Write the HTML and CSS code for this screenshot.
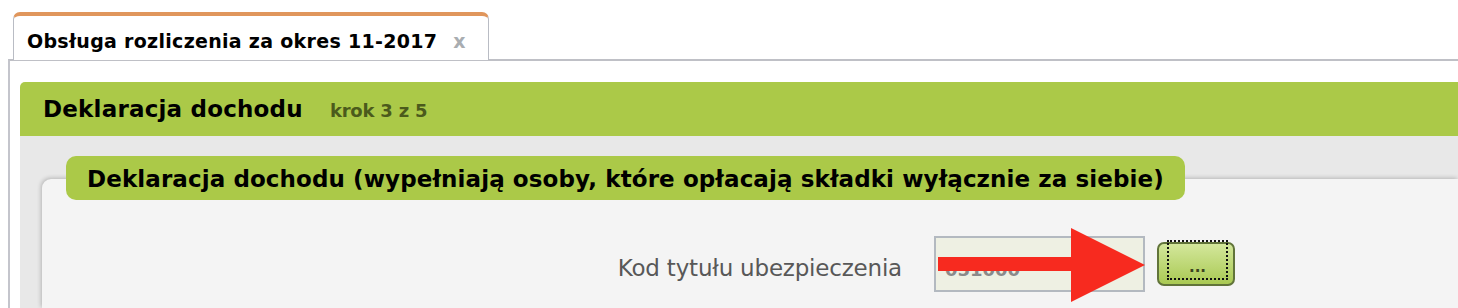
FILE: index.html
```html
<!DOCTYPE html>
<html lang="pl">
<head>
<meta charset="utf-8">
<title>Obsługa rozliczenia</title>
<link rel="stylesheet" href="styles.css">
</head>
<body>
<div class="tabbar">
  <div class="tab">
    <span class="tab-title">Obsługa rozliczenia za okres 11-2017</span>
    <span class="tab-close">x</span>
  </div>
</div>
<div class="panel">
  <div class="wizard-head">
    <span class="wizard-title">Deklaracja dochodu</span>
    <span class="wizard-step">krok 3 z 5</span>
  </div>
  <div class="wizard-body">
    <div class="group-title">Deklaracja dochodu (wypełniają osoby, które opłacają składki wyłącznie za siebie)</div>
    <div class="group-box">
      <div class="field-row">
        <label class="field-label" for="kod">Kod tytułu ubezpieczenia</label>
        <div class="field-input-wrap">
          <input id="kod" class="field-input" type="text" value="051000">
          <svg class="arrow" width="207" height="74" viewBox="0 0 207 74">
            <rect x="0" y="29" width="136" height="14" fill="#f72a1f"/>
            <polygon points="133,0 207,37 133,74" fill="#f72a1f"/>
          </svg>
        </div>
        <button class="pick-btn" type="button"><span class="pick-focus">...</span></button>
      </div>
    </div>
  </div>
</div>
</body>
</html>
```

FILE: styles.css
```css
html, body {
  margin: 0;
  padding: 0;
  background: #ffffff;
  overflow: hidden;
}
body {
  width: 1458px;
  height: 308px;
  font-family: "DejaVu Sans", Verdana, sans-serif;
}
.tabbar {
  display: flex;
  padding: 12px 0 0 13px;
  position: relative;
  z-index: 2;
}
.tab {
  display: flex;
  align-items: center;
  box-sizing: border-box;
  width: 476px;
  height: 48px;
  background: #fff;
  border-top: 4px solid #e0965c;
  border-left: 1px solid #b9bcc4;
  border-right: 1px solid #b9bcc4;
  border-radius: 7px 7px 0 0;
  padding: 6px 0 0 13px;
  margin-bottom: -1px;
}
.tab-title {
  font-weight: bold;
  font-size: 19px;
  color: #000;
  letter-spacing: 0.3px;
}
.tab-close {
  margin-left: 16px;
  color: #a9adb1;
  font-weight: bold;
  font-size: 19px;
  font-family: "DejaVu Sans", sans-serif;
}
.panel {
  margin-left: 8px;
  border-top: 2px solid #bfc0c6;
  border-left: 2px solid #c4c5cc;
  padding: 21px 0 0 10px;
}
.wizard-head {
  height: 54px;
  line-height: 54px;
  box-sizing: border-box;
  padding: 0 0 0 23px;
  background: #abc948;
  border-radius: 5px 0 0 0;
  white-space: nowrap;
}
.wizard-title {
  font-weight: bold;
  font-size: 23px;
  color: #000;
  letter-spacing: 0.2px;
}
.wizard-step {
  margin-left: 22px;
  font-weight: bold;
  font-size: 18px;
  color: #4b5a1c;
  letter-spacing: -0.2px;
}
.wizard-body {
  background: #e8e8e8;
  padding: 20px 0 0 22px;
  height: 152px;
}
.group-title {
  position: relative;
  z-index: 1;
  display: inline-block;
  margin-left: 24px;
  height: 44px;
  line-height: 41px;
  box-sizing: border-box;
  padding: 3px 21px 0 21px;
  background: #abc948;
  border-radius: 10px;
  font-weight: bold;
  font-size: 23px;
  color: #000;
  letter-spacing: 0.1px;
  white-space: nowrap;
}
.group-box {
  margin-top: -21px;
  height: 129px;
  box-sizing: border-box;
  background: #f4f4f4;
  border-radius: 9px 0 0 0;
  box-shadow: -1px -1px 4px rgba(0, 0, 0, 0.22);
  padding-top: 57px;
}
.field-row {
  display: flex;
  align-items: center;
}
.field-label {
  box-sizing: border-box;
  width: 892px;
  padding: 8px 32px 0 0;
  text-align: right;
  font-size: 23px;
  color: #585858;
  letter-spacing: -0.2px;
  white-space: nowrap;
}
.field-input-wrap {
  position: relative;
}
.field-input {
  display: block;
  box-sizing: border-box;
  width: 211px;
  height: 56px;
  border: 2px solid #b3b9c0;
  background: #eef0e3;
  padding: 10px 0 0 9px;
  font-family: "DejaVu Sans", sans-serif;
  font-size: 18px;
  color: #8a8a8a;
  font-weight: bold;
  outline: none;
}
.arrow {
  position: absolute;
  left: 4px;
  top: -8px;
}
.pick-btn {
  margin-left: 12px;
  width: 78px;
  height: 44px;
  box-sizing: border-box;
  border: 2px solid #61743a;
  border-radius: 7px;
  background: linear-gradient(#d3e79b, #a9c953);
  padding: 0;
  display: flex;
  align-items: stretch;
  justify-content: center;
}
.pick-focus {
  flex: 1;
  margin: -4px 5px 4px 8px;
  border: 2px dotted #111;
  display: flex;
  align-items: flex-end;
  justify-content: center;
  font-weight: bold;
  font-size: 15px;
  color: #3b4320;
  font-family: "DejaVu Sans", sans-serif;
  line-height: 22px;
}
```
